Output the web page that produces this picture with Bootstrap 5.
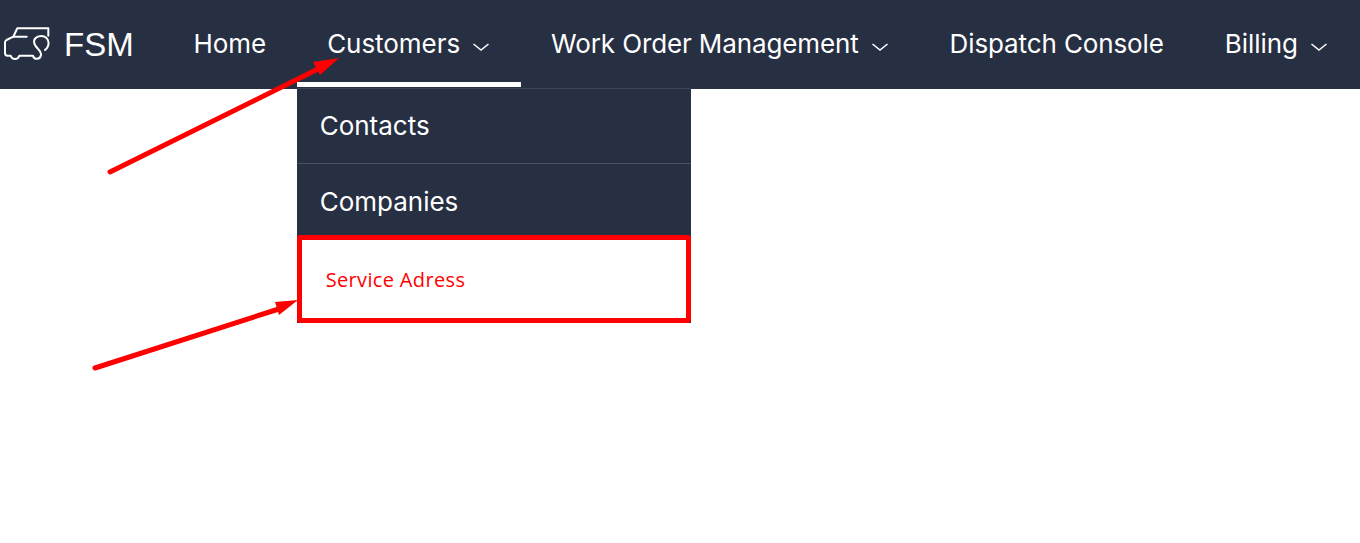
<!DOCTYPE html>
<html lang="en">
<head>
  <meta charset="UTF-8" />
  <meta name="viewport" content="width=device-width, initial-scale=1.0"/>
  <title>FSM</title>
  <link href="https://cdn.jsdelivr.net/npm/bootstrap@5.3.0/dist/css/bootstrap.min.css" rel="stylesheet"/>
  <style>
    body { background: #fff; overflow: hidden; height: 543px; position: relative; font-family: "Inter", sans-serif; }

    .fsm-bar { background: #272f42; height: 89px; padding: 0; flex-wrap: nowrap; justify-content: flex-start; overflow: visible; }
    .fsm-brand { display: flex; align-items: center; padding-left: 4px; width: 163px; color: #fff; margin: 0; flex: none; }
    .fsm-brand span { font-family: "Liberation Sans", sans-serif; font-size: 33px; margin-left: 14px; line-height: 1; }
    .fsm-tabs { display: flex; flex-direction: row; flex-wrap: nowrap; height: 89px; margin: 0; padding: 0; list-style: none; }
    .fsm-tab { position: relative; height: 89px; flex: none; }
    .fsm-tab > a { display: flex; align-items: center; height: 87px; padding: 0 30.5px; color: #fff; font-size: 26px; letter-spacing: -.05px; text-decoration: none; white-space: nowrap; }
    .fsm-tab.fsm-tight > a { letter-spacing: -.12px; }
    .fsm-tab.is-open > a { box-shadow: inset 0 -5px 0 #fff; }
    .fsm-tab svg { margin-left: 12px; margin-top: 6px; }

    .fsm-menu { display: block; position: absolute; top: 88px; left: 0; width: 394px; margin: 0; padding: 0; border: 0; border-top: 1px solid #3c4456; border-radius: 0; background: #272f42; }
    .fsm-menu .dropdown-item { color: #fff; font-size: 26px; padding: 0 23px 2px; height: 74px; display: flex; align-items: center; background: transparent; }
    .fsm-menu li + li .dropdown-item { border-top: 1px solid #4a5160; padding: 1px 23px 0; }
    .fsm-menu li + li .fsm-redbox { height: 88px; margin-top: -2px; background: #fff; border: 5px solid #f00; border-radius: 3px; padding: 2px 0 0 24px; color: #f00; font-family: "Open Sans", sans-serif; font-size: 20px; letter-spacing: .35px; }

    .fsm-arrows { position: absolute; left: 0; top: 0; pointer-events: none; }
  </style>
</head>
<body>
  <nav class="navbar fsm-bar">
    <a class="fsm-brand text-decoration-none" href="#">
      <svg width="46" height="35" viewBox="0 0 46 35" fill="none" stroke="#fff" stroke-width="2" stroke-linecap="round" stroke-linejoin="round">
        <path d="M44.300 8.700 V1.300 H13.300 L9.300 9.700 L2.500 13 Q1 14 1 15.500 V26 Q1 28.700 3.500 28.700 H6.700 C8 33 14 33 15.300 28.700 H29 C30 33 36 33 37 28 C38 24 33 22 31 18 C28 12 33 9 37 9 C42 9 46 13 44 19 C43.500 21 42 22 41 23" />
        <path d="M9.300 9.700 H22.700" />
      </svg>
      <span>FSM</span>
    </a>
    <ul class="fsm-tabs">
      <li class="fsm-tab"><a href="#">Home</a></li>
      <li class="fsm-tab is-open">
        <a href="#">Customers
          <svg width="18" height="10" viewBox="0 0 18 10" fill="none" stroke="#fff" stroke-width="1.6"><path d="M1.500 2 L9 8 L16.500 2"/></svg>
        </a>
        <ul class="dropdown-menu fsm-menu">
          <li><a class="dropdown-item" href="#">Contacts</a></li>
          <li><a class="dropdown-item" href="#">Companies</a></li>
          <li><a class="dropdown-item fsm-redbox" href="#">Service Adress</a></li>
        </ul>
      </li>
      <li class="fsm-tab fsm-tight">
        <a href="#">Work Order Management
          <svg width="18" height="10" viewBox="0 0 18 10" fill="none" stroke="#fff" stroke-width="1.6"><path d="M1.500 2 L9 8 L16.500 2"/></svg>
        </a>
      </li>
      <li class="fsm-tab fsm-tight"><a href="#">Dispatch Console</a></li>
      <li class="fsm-tab">
        <a href="#">Billing
          <svg width="18" height="10" viewBox="0 0 18 10" fill="none" stroke="#fff" stroke-width="1.6"><path d="M1.500 2 L9 8 L16.500 2"/></svg>
        </a>
      </li>
    </ul>
  </nav>

  <!-- annotation arrows drawn over the page -->
  <svg class="fsm-arrows" width="1360" height="543" viewBox="0 0 1360 543">
    <path d="M110 172 L322 67" stroke="#f00" stroke-width="5" stroke-linecap="round" fill="none"/>
    <path d="M339 58 L313 62 L320 75 Z" fill="#f00"/>
    <path d="M95 368 L282 308" stroke="#f00" stroke-width="5" stroke-linecap="round" fill="none"/>
    <path d="M298 300 L275 302 L279 315 Z" fill="#f00"/>
  </svg>

  <script src="https://cdn.jsdelivr.net/npm/bootstrap@5.3.0/dist/js/bootstrap.bundle.min.js"></script>
</body>
</html>
